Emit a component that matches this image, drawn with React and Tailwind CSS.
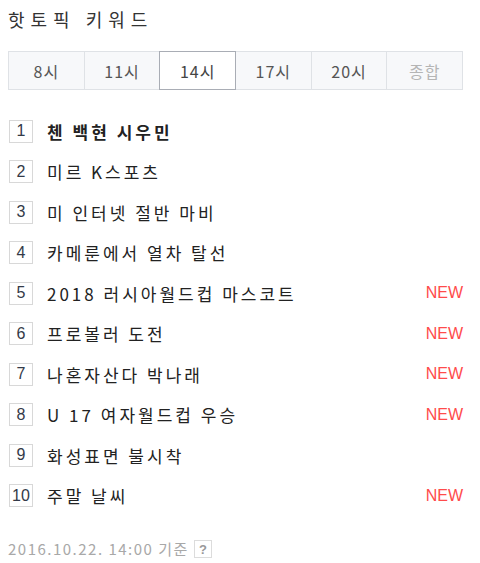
import React, { useState } from "react";

const hours = ["8시", "11시", "14시", "17시", "20시", "종합"];

const keywords = [
  { text: "첸 백현 시우민", isNew: false, bold: true },
  { text: "미르 K스포츠", isNew: false },
  { text: "미 인터넷 절반 마비", isNew: false },
  { text: "카메룬에서 열차 탈선", isNew: false },
  { text: "2018 러시아월드컵 마스코트", isNew: true },
  { text: "프로볼러 도전", isNew: true },
  { text: "나혼자산다 박나래", isNew: true },
  { text: "U 17 여자월드컵 우승", isNew: true },
  { text: "화성표면 불시착", isNew: false },
  { text: "주말 날씨", isNew: true },
];

const kr = "font-['Noto_Sans_CJK_KR','Noto_Sans',sans-serif]";

const App = () => {
  const [active, setActive] = useState(2);

  return (
    <div className={`w-[480px] h-[563px] bg-white px-2 pt-[7px] ${kr}`}>
      <h1 className="text-[18px] leading-[24px] tracking-[6px] text-[#333] font-normal">
        핫토픽 키워드
      </h1>

      {/* hour tabs */}
      <div className="mt-[20px] flex w-[455px] h-[39px]">
        {hours.map((h, i) => (
          <button
            key={h}
            onClick={() => setActive(i)}
            className={
              "flex-1 flex items-center justify-center text-[16px] tracking-[1px] border -ml-px first:ml-0 " +
              (i === active
                ? "bg-white border-[#a9adb5] text-[#444] z-10"
                : "bg-[#f7f8fa] border-[#dfe2e6] " + (i === 5 ? "text-[#b5b5b5]" : "text-[#555]"))
            }
          >
            {h}
          </button>
        ))}
      </div>

      {/* keyword list */}
      <ol className="mt-[21px]">
        {keywords.map((k, i) => (
          <li key={i} className="flex items-center h-[40.5px]">
            <span className="w-[24px] h-[23px] flex items-center justify-center border border-[#d8d8d8] bg-white text-[16px] text-[#333a48] font-['Liberation_Sans',Arial,sans-serif] ml-px">
              {i + 1}
            </span>
            <span
              className={
                "ml-[14px] flex-1 text-[17px] tracking-[3px] text-[#222] " +
                (k.bold ? "font-bold" : "font-normal")
              }
            >
              {k.text}
            </span>
            {k.isNew && (
              <span className="text-[16px] text-[#ff4b4b] font-['Liberation_Sans',Arial,sans-serif] mr-[9px]">
                NEW
              </span>
            )}
          </li>
        ))}
      </ol>

      <div className="mt-[22px] flex items-center text-[15px] tracking-[1.5px] text-[#a8a8a8]">
        <span>2016.10.22. 14:00 기준</span>
        <span className="ml-[5px] w-[18px] h-[18px] flex items-center justify-center border border-[#dcdcdc] text-[13px] font-bold text-[#999] tracking-normal font-['Liberation_Sans',Arial,sans-serif]">
          ?
        </span>
      </div>
    </div>
  );
};

export default App;
